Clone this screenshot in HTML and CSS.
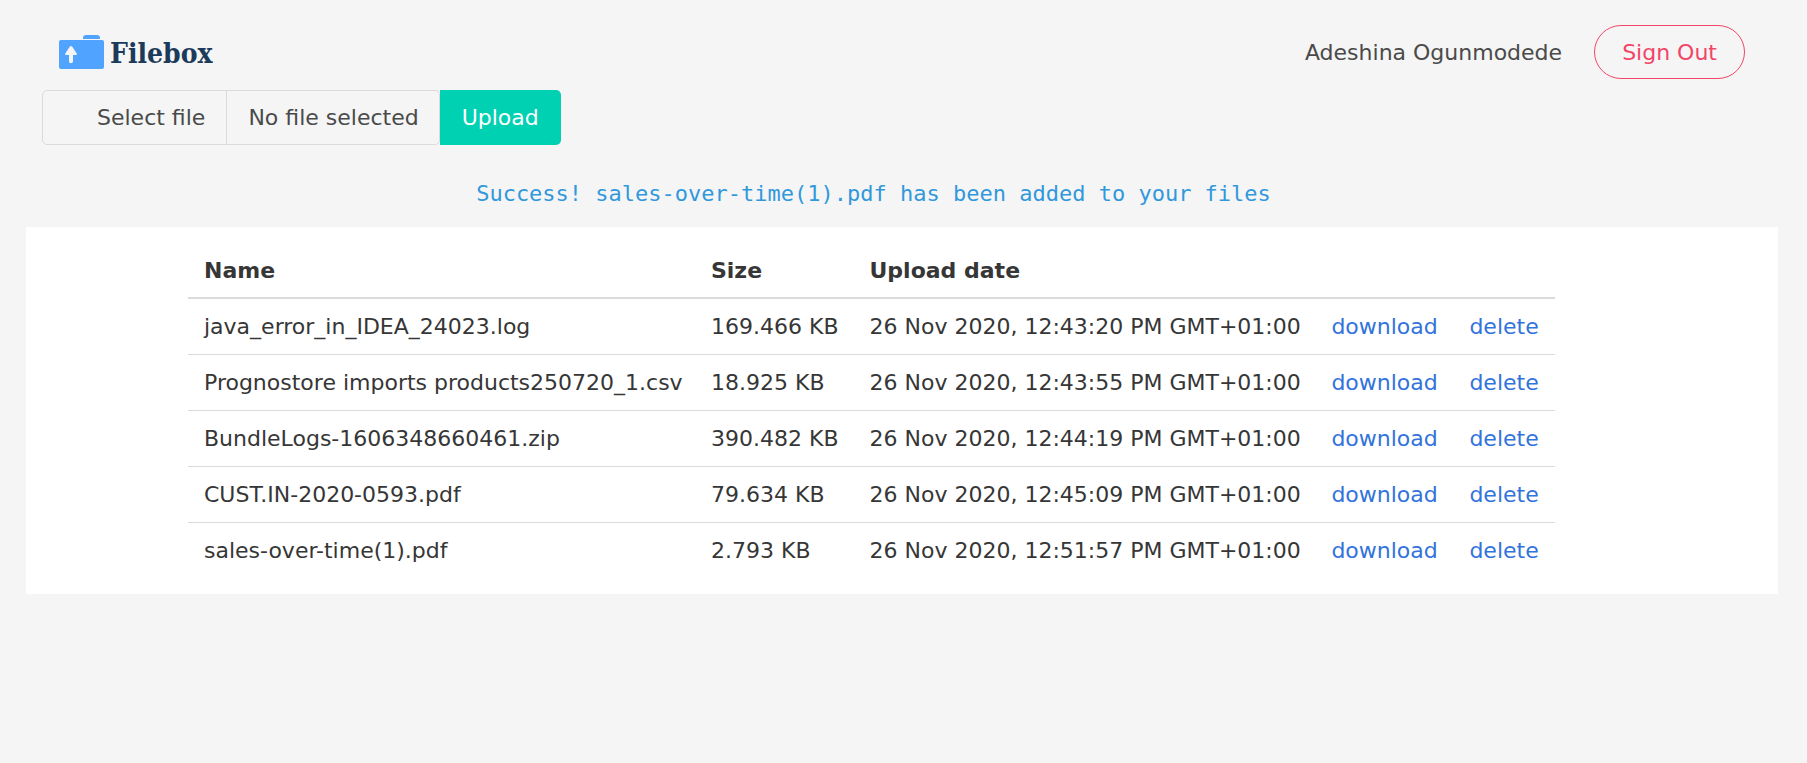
FILE: index.html
```html
<!DOCTYPE html>
<html lang="en">
<head>
<meta charset="utf-8">
<meta name="viewport" content="width=device-width, initial-scale=1">
<title>Filebox</title>
<link rel="stylesheet" href="styles.css">
</head>
<body>
<header class="navbar">
  <a class="brand" href="#">
    <svg class="brand-icon" viewBox="0 0 45 34" aria-hidden="true">
      <path fill="#50a3ff" d="M24 4V3q0-3 3-3h11q3 0 3 3v1z"/>
      <rect fill="#50a3ff" y="5" width="45" height="29" rx="2"/>
      <path fill="#f5f5f5" d="M12 11q-.8 0-1.500 1L6.300 18.500q-.6 1.500.7 1.500H10v6.500q0 1.800 2 1.800t2-1.800V20h3q1.300 0 .7-1.500L13.500 12q-.7-1-1.500-1z"/>
    </svg>
    <span class="brand-name">Filebox</span>
  </a>
  <div class="account">
    <span>Adeshina Ogunmodede</span>
    <button class="sign-out" type="button">Sign Out</button>
  </div>
</header>
<main>
  <form class="upload">
    <label class="file">
      <input class="file-input" type="file">
      <span class="file-cta">Select file</span>
      <span class="file-name">No file selected</span>
    </label>
    <button class="upload-button" type="button">Upload</button>
  </form>
  <p class="message" role="status">Success! sales-over-time(1).pdf has been added to your files</p>
  <section class="panel">
    <table class="files">
      <colgroup>
        <col class="col-name"><col class="col-size"><col class="col-date"><col class="col-download"><col class="col-delete">
      </colgroup>
      <thead>
        <tr><th scope="col">Name</th><th scope="col">Size</th><th scope="col">Upload date</th><th></th><th></th></tr>
      </thead>
      <tbody>
        <tr><td>java_error_in_IDEA_24023.log</td><td>169.466 KB</td><td>26 Nov 2020, 12:43:20 PM GMT+01:00</td><td><a href="#">download</a></td><td><a href="#">delete</a></td></tr>
        <tr><td>Prognostore imports products250720_1.csv</td><td>18.925 KB</td><td>26 Nov 2020, 12:43:55 PM GMT+01:00</td><td><a href="#">download</a></td><td><a href="#">delete</a></td></tr>
        <tr><td>BundleLogs-1606348660461.zip</td><td>390.482 KB</td><td>26 Nov 2020, 12:44:19 PM GMT+01:00</td><td><a href="#">download</a></td><td><a href="#">delete</a></td></tr>
        <tr><td>CUST.IN-2020-0593.pdf</td><td>79.634 KB</td><td>26 Nov 2020, 12:45:09 PM GMT+01:00</td><td><a href="#">download</a></td><td><a href="#">delete</a></td></tr>
        <tr><td>sales-over-time(1).pdf</td><td>2.793 KB</td><td>26 Nov 2020, 12:51:57 PM GMT+01:00</td><td><a href="#">download</a></td><td><a href="#">delete</a></td></tr>
      </tbody>
    </table>
  </section>
</main>
</body>
</html>
```

FILE: styles.css
```css
* {
  box-sizing: border-box;
}

body {
  margin: 0;
  padding: 25px 29px 32px 26px;
  background: #f5f5f5;
  color: #4a4a4a;
  font: 22px/33px "DejaVu Sans", sans-serif;
}

a {
  color: #3273dc;
  text-decoration: none;
}

button {
  font: inherit;
  cursor: pointer;
}

.navbar {
  display: flex;
  justify-content: space-between;
  align-items: center;
  padding: 0 33px;
}

.brand {
  display: flex;
  align-items: center;
  gap: 6px;
}

.brand-icon {
  width: 45px;
  height: 34px;
}

.brand-name {
  padding-top: 4px;
  color: #1c3a5a;
  font: bold 28px/34px "DejaVu Serif Condensed", "DejaVu Serif", serif;
}

.account {
  display: flex;
  align-items: center;
  gap: 32px;
}

.sign-out {
  height: 54px;
  padding: 0 27px;
  border: 1px solid #f14668;
  border-radius: 27px;
  background: transparent;
  color: #f14668;
}

.upload {
  display: flex;
  margin: 11px 16px 0;
}

.file {
  display: flex;
  position: relative;
  cursor: pointer;
}

.file-input {
  position: absolute;
  inset: 0;
  width: 100%;
  opacity: 0;
}

.file-cta,
.file-name {
  padding: 10px 21px;
  border: 1px solid #dbdbdb;
  white-space: nowrap;
}

.file-cta {
  padding-left: 54px;
  border-radius: 5px 0 0 5px;
}

.file-name {
  padding-right: 20px;
  border-left: 0;
  border-radius: 0 5px 5px 0;
}

.upload-button {
  padding: 0 22px;
  border: 0;
  border-radius: 0 5px 5px 0;
  background: #00d1b2;
  color: #fff;
}

.message {
  margin: 32px 57px 17px 0;
  color: #3298dc;
  font-family: "DejaVu Sans Mono", monospace;
  text-align: center;
}

.panel {
  padding: 16px 0;
  background: #fff;
}

.files {
  width: 78%;
  margin-left: 162px;
  table-layout: fixed;
  border-collapse: collapse;
  color: #363636;
}

.col-name {
  width: 37.1%;
}

.col-size {
  width: 11.6%;
}

.col-date {
  width: 33.8%;
}

.col-download {
  width: 10.1%;
}

.col-delete {
  width: 7.4%;
}

.files th,
.files td {
  padding: 11px 0 11px 16px;
  border-bottom: 1px solid #dbdbdb;
  text-align: left;
  white-space: nowrap;
}

.files th {
  padding-bottom: 10px;
  border-bottom-width: 2px;
}

.files tbody tr:last-child td {
  border-bottom: 0;
}
```
